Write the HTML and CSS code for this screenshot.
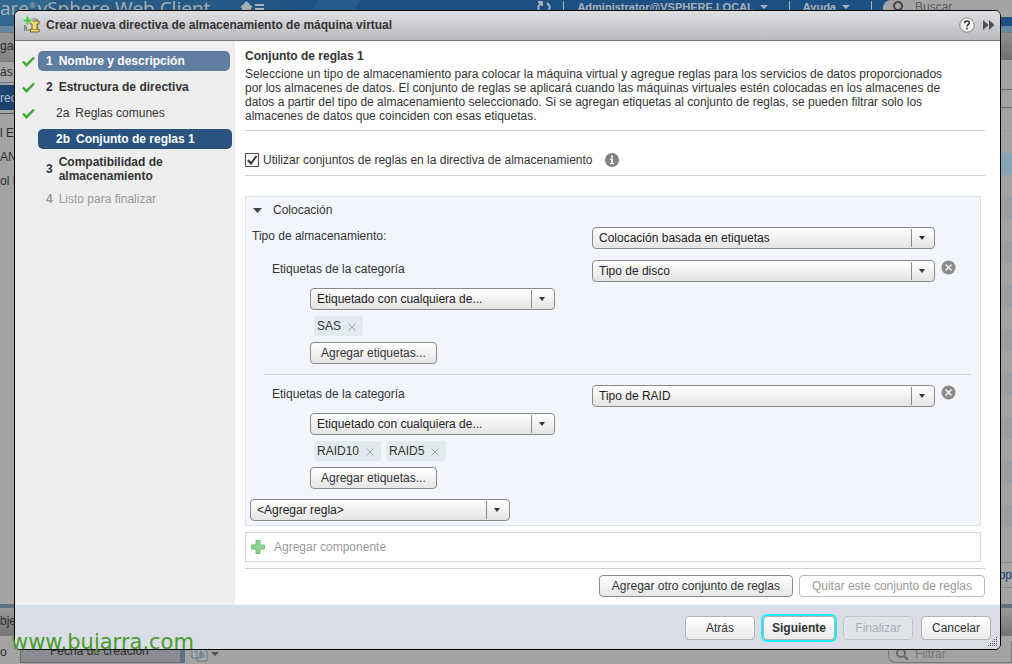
FILE: index.html
```html
<!DOCTYPE html>
<html lang="es">
<head>
<meta charset="utf-8">
<title>Crear nueva directiva de almacenamiento</title>
<link rel="stylesheet" href="styles.css">
</head>
<body>
<div class="client">
  <header class="topbar">
    <div class="brand"><span>are<sup>®</sup></span><span>vSphere Web Client</span></div>
    <svg class="home" width="24" height="14" viewBox="0 0 24 14"><path d="M0 7.5 6.5 1 13 7.500h-2V13H2V7.500zM15 4h9v2h-9zM15 8h9v2h-9z" fill="#a9b0b6"/></svg>
    <div class="account">
      <svg width="14" height="14" viewBox="0 0 14 14" fill="none" stroke="#a9b0b6" stroke-width="2"><path d="M1 2h4v4M4 3C0 6 1 11 4 12M10 3c4 3 3 7 0 9"/></svg>
      <i class="bar"></i>
      <span>Administrator@VSPHERE.LOCAL</span><i class="caret light"></i>
      <i class="bar"></i>
      <span>Ayuda</span><i class="caret light"></i>
      <i class="bar"></i>
    </div>
    <div class="search"><svg width="14" height="14" viewBox="0 0 14 14" fill="none" stroke="#444" stroke-width="2"><circle cx="7" cy="6" r="4"/><path d="m9 9 3 4"/></svg><span>Buscar</span></div>
  </header>
  <div class="strip"></div>
  <div class="main">
    <div class="nav">
      <div class="nav-title">gad</div>
      <div class="nav-back">ás</div>
      <div class="nav-current">rec</div>
      <div class="nav-list"><span>l Er</span><span>AN</span><span>ol I</span></div>
    </div>
    <div class="grid-pane">
      <div class="grid-title"></div>
      <div class="grid-tools"></div>
      <div class="grid-tools second"></div>
      <div class="grid-rows"></div>
      <div class="grid-tab">op</div>
    </div>
  </div>
  <div class="steel"></div>
  <div class="bottom-title">bje</div>
  <div class="bottom">
    <span class="col-o">o</span>
    <span class="col-date">Fecha de creación</span>
    <svg class="copy" width="17" height="18" viewBox="0 0 17 18" fill="#a9adb1" stroke="#667582"><path d="M1 2h9v12H1zM6 5h7l3 3v9H6z"/><path d="M3 5h3M3 8h2M8 9h5M8 11h6M8 13h6"/></svg>
    <i class="caret"></i>
    <div class="filter"><svg width="14" height="14" viewBox="0 0 14 14" fill="none" stroke="#666" stroke-width="2"><circle cx="6" cy="6" r="4"/><path d="m9 9 4 4"/></svg><span>Filtrar</span></div>
  </div>
</div>

<div class="dialog" role="dialog" aria-labelledby="dlg-title">
  <header class="dialog-head">
    <svg width="17" height="17" viewBox="0 0 17 17"><path d="M3 3h11v11H3z" fill="#d5d7da" stroke="#777"/><path d="M1.500 9v6M1.500 12h3" stroke="#888"/><path d="M7 5h9v3h-2v5h2v3H7.500V13H9V8H7z" fill="#f0d978" stroke="#7b621b"/><path d="M9 13.500h5" stroke="#b8973a"/><path d="M3 0h3v3h3v3H6v3H3V6H0V3h3z" fill="#4cc34f" stroke="#fff" stroke-width=".6"/></svg>
    <h1 id="dlg-title">Crear nueva directiva de almacenamiento de máquina virtual</h1>
    <button class="icon-btn" aria-label="Ayuda"><svg width="16" height="16" viewBox="0 0 16 16"><circle cx="8" cy="8" r="7.200" fill="#f3f3f4" stroke="#87878a"/><path d="M5.700 6.200C5.700 3.300 10.300 3.300 10.300 6c0 1.700-2.300 1.700-2.300 3.500M8 10.700v1.700" fill="none" stroke="#333" stroke-width="1.600"/></svg></button>
    <button class="icon-btn" aria-label="Contraer"><svg width="12" height="10" viewBox="0 0 12 10"><path d="m0 0 5.500 5L0 10zM6 0l5.500 5L6 10z" fill="#505052"/></svg></button>
  </header>
  <div class="dialog-body">
    <nav class="steps">
      <div class="step"><svg class="tick" width="13" height="11" viewBox="0 0 13 11"><path d="m1 5.500 3.500 3.700L12 1.500" /></svg><div class="step-label visited"><b>1</b><b>Nombre y descripción</b></div></div>
      <div class="step"><svg class="tick" width="13" height="11" viewBox="0 0 13 11"><path d="m1 5.500 3.500 3.700L12 1.500" /></svg><div class="step-label"><b>2</b><b>Estructura de directiva</b></div></div>
      <div class="step"><svg class="tick" width="13" height="11" viewBox="0 0 13 11"><path d="m1 5.500 3.500 3.700L12 1.500" /></svg><div class="step-label sub"><span>2a</span><span>Reglas comunes</span></div></div>
      <div class="step"><div class="step-label sub current"><b>2b</b><b>Conjunto de reglas 1</b></div></div>
      <div class="step"><div class="step-label"><b>3</b><b>Compatibilidad de<br>almacenamiento</b></div></div>
      <div class="step"><div class="step-label pending"><b>4</b><span>Listo para finalizar</span></div></div>
    </nav>
    <main class="content">
      <section class="intro">
        <h2>Conjunto de reglas 1</h2>
        <p>Seleccione un tipo de almacenamiento para colocar la máquina virtual y agregue reglas para los servicios de datos proporcionados<br>por los almacenes de datos. El conjunto de reglas se aplicará cuando las máquinas virtuales estén colocadas en los almacenes de<br>datos a partir del tipo de almacenamiento seleccionado. Si se agregan etiquetas al conjunto de reglas, se pueden filtrar solo los<br>almacenes de datos que coinciden con esas etiquetas.</p>
      </section>
      <div class="use-rules">
        <input type="checkbox" id="use" checked><label for="use">Utilizar conjuntos de reglas en la directiva de almacenamiento</label>
        <svg width="14" height="14" viewBox="0 0 14 14"><circle cx="7" cy="7" r="7" fill="#818181"/><path d="M6 2.500h2v2H6zM5 5.500h3v4.500h1v1.200H5V10h1V6.700H5z" fill="#fff"/></svg>
      </div>
      <section class="panel">
        <button class="panel-title"><svg width="9" height="5" viewBox="0 0 9 5"><path d="M0 0h9L4.500 5z" fill="#444"/></svg>Colocación</button>
        <div class="field type">
          <label for="kind">Tipo de almacenamiento:</label>
          <select id="kind"><option>Colocación basada en etiquetas</option></select>
        </div>
        <div class="category">
          <div class="field">
            <label for="cat1">Etiquetas de la categoría</label>
            <select id="cat1"><option>Tipo de disco</option></select>
            <button class="icon-btn" aria-label="Quitar"><svg width="15" height="15" viewBox="0 0 15 15"><circle cx="7.500" cy="7.500" r="7" fill="#8b8b8b"/><path d="m4.500 4.500 6 6m0-6-6 6" stroke="#fff" stroke-width="1.300"/></svg></button>
          </div>
          <div class="tags">
            <select class="match" aria-label="Coincidencia"><option>Etiquetado con cualquiera de...</option></select>
            <div class="chips"><span class="chip">SAS<button aria-label="Quitar SAS"><svg width="8" height="8" viewBox="0 0 8 8"><path d="m.5.5 7 7m0-7-7 7"/></svg></button></span></div>
            <button class="btn">Agregar etiquetas...</button>
          </div>
        </div>
        <div class="category ruled">
          <div class="field">
            <label for="cat2">Etiquetas de la categoría</label>
            <select id="cat2"><option>Tipo de RAID</option></select>
            <button class="icon-btn" aria-label="Quitar"><svg width="15" height="15" viewBox="0 0 15 15"><circle cx="7.500" cy="7.500" r="7" fill="#8b8b8b"/><path d="m4.500 4.500 6 6m0-6-6 6" stroke="#fff" stroke-width="1.300"/></svg></button>
          </div>
          <div class="tags">
            <select class="match" aria-label="Coincidencia"><option>Etiquetado con cualquiera de...</option></select>
            <div class="chips"><span class="chip">RAID10<button aria-label="Quitar RAID10"><svg width="8" height="8" viewBox="0 0 8 8"><path d="m.5.5 7 7m0-7-7 7"/></svg></button></span><span class="chip">RAID5<button aria-label="Quitar RAID5"><svg width="8" height="8" viewBox="0 0 8 8"><path d="m.5.5 7 7m0-7-7 7"/></svg></button></span></div>
            <button class="btn">Agregar etiquetas...</button>
          </div>
        </div>
        <select class="add-rule" aria-label="Agregar regla"><option>&lt;Agregar regla&gt;</option></select>
      </section>
      <button class="add-component" disabled><svg width="14" height="14" viewBox="0 0 14 14"><path d="M5 .5h4V5h4.500v4H9v4.500H5V9H.5V5H5z" fill="#8fd28f" stroke="#74bd78"/></svg>Agregar componente</button>
      <div class="set-actions">
        <button class="btn">Agregar otro conjunto de reglas</button>
        <button class="btn" disabled>Quitar este conjunto de reglas</button>
      </div>
    </main>
  </div>
  <footer class="dialog-foot">
    <button class="nav-btn">Atrás</button>
    <button class="nav-btn primary">Siguiente</button>
    <button class="nav-btn" disabled>Finalizar</button>
    <button class="nav-btn">Cancelar</button>
    <svg class="grip" width="10" height="10" viewBox="0 0 10 10"><path d="M8 0h1v1H8zM6 2h1v1H6zm2 0h1v1H8zM4 4h1v1H4zm2 0h1v1H6zm2 0h1v1H8zM2 6h1v1H2zm2 0h1v1H4zm2 0h1v1H6zm2 0h1v1H8zM0 8h1v1H0zm2 0h1v1H2zm2 0h1v1H4zm2 0h1v1H6zm2 0h1v1H8z" fill="#555"/></svg>
  </footer>
</div>
<div class="watermark">www.bujarra.com</div>
</body>
</html>
```
FILE: styles.css
```css
* { box-sizing: border-box; }
body, h1, h2, p { margin: 0; }
body, button, select {
  font-family: "Liberation Sans", Arial, sans-serif;
  font-size: 12px;
  color: #333;
}
body { height: 100vh; overflow: hidden; }
button { background: none; border: 0; padding: 0; }
svg { flex: none; display: block; }

/* Dimmed client behind the dialog */
.client {
  height: 100vh;
  display: flex;
  flex-direction: column;
  background: #a3a3a3;
  color: #2c2c2c;
  white-space: nowrap;
}
.topbar {
  flex: none;
  height: 26px;
  display: flex;
  align-items: flex-start;
  background: linear-gradient(125deg, #30688f 0 5%, #265b86 5% 20%, #1d5284 31%, #255c8c 31% 35%, #1c5083 35%);
  color: #a9b0b6;
}
.brand {
  width: 240px;
  display: flex;
  gap: 2px;
  font: 19px/16px "Open Sans", sans-serif;
}
.brand sup { font-size: 8px; line-height: 8px; }
.account {
  flex: 1;
  display: flex;
  justify-content: flex-end;
  align-items: center;
  gap: 6px;
  height: 14px;
  padding-right: 11px;
  font-size: 11px;
  font-weight: bold;
}
.bar { width: 1px; height: 12px; background: #a9b0b6; margin: 0 7px 0 15px; }
.account svg + .bar { margin-left: 6px; }
.bar:last-child { margin-right: 0; }
.caret { border: 4px solid transparent; border-top-color: #4b4b4b; border-bottom: 0; }
.caret.light { border-top-color: #a9b0b6; }
.search {
  width: 129px;
  height: 17px;
  display: flex;
  gap: 10px;
  padding-left: 8px;
  line-height: 14px;
  background: #a4a4a4;
  border-radius: 8px 0 0 8px;
  color: #5c5c5c;
}
.strip { flex: none; height: 7px; background: #66879f; border-bottom: 1px solid #777; }
.main { flex: 1; display: flex; justify-content: space-between; min-height: 0; }
.nav { width: 20px; overflow: hidden; }
.nav-title {
  height: 28px;
  line-height: 26px;
  background: linear-gradient(#989898, #838383);
}
.nav-back { height: 22px; line-height: 20px; background: #a6a6a6; border: solid #777; border-width: 1px 0; }
.nav-current { margin-top: 2px; height: 25px; line-height: 26px; background: #1c4470; color: #b5bcc5; }
.nav-list { margin-top: 3px; padding-top: 7px; border-top: 1px solid #555; display: grid; line-height: 24px; }
.grid-pane { width: 16px; display: flex; flex-direction: column; }
.grid-title { height: 27px; background: linear-gradient(#8f8f8f, #707070); }
.grid-tools { height: 30px; border-bottom: 1px solid #666; }
.grid-tools.second { height: 18px; }
.grid-rows {
  flex: 1;
  margin-top: 22px;
  background:
    linear-gradient(#86a5b8, #86a5b8) 0 23px / 100% 22px no-repeat,
    repeating-linear-gradient(#999ea2 0 1px, #a3a3a3 1px 23px, #999ea2 23px 44px);
}
.grid-tab { margin: 14px 0 16px; height: 26px; line-height: 24px; border: solid #858585; border-width: 1px 0; color: #153f68; text-align: right; }
.steel { flex: none; height: 4px; background: #5f7282; }
.bottom-title { flex: none; height: 27px; line-height: 26px; background: linear-gradient(#9a9a9a, #757579); }
.bottom { flex: none; height: 29px; padding-top: 5px; display: flex; border-top: 1px solid #777; }
.col-o { width: 20px; line-height: 22px; }
.col-date { width: 165px; height: 22px; line-height: 20px; padding-left: 29px; background: #8b8c91; border: solid #6f6467; border-width: 0 0 1px 1px; border-right: 5px solid #5f7282; }
.copy { margin: 3px 3px 0 6px; }
.bottom .caret { margin-top: 11px; height: 4px; }
.filter { margin-left: auto; width: 124px; height: 22px; padding: 6px 0 0 6px; display: flex; gap: 6px; border: 1px solid #777; border-top: 0; border-radius: 0 0 0 8px; color: #747474; }

/* Dialog */
.dialog {
  position: absolute;
  inset: 10px 11px 14px 14px;
  display: flex;
  flex-direction: column;
  border: 1px solid #000;
  border-radius: 6px;
  overflow: hidden;
  background: #fff;
}
.dialog-head {
  flex: none;
  height: 30px;
  display: flex;
  align-items: center;
  gap: 8px;
  padding: 0 5px 2px 8px;
  border-bottom: 1px solid #77777a;
  background: linear-gradient(#dedfe2, #b9b9be);
}
.dialog-head h1 { flex: 1; margin-left: -2px; font-size: 12px; line-height: 16px; }
.dialog-body { flex: 1; display: flex; min-height: 0; }
.steps {
  flex: none;
  width: 220px;
  padding: 10px 3px 0 7px;
  display: flex;
  flex-direction: column;
  gap: 6px;
  background: #eee;
}
.step { display: flex; align-items: center; justify-content: flex-end; gap: 3px; }
.tick { fill: none; stroke: #3aab2c; stroke-width: 2.4; }
.step-label {
  width: 194px;
  min-height: 20px;
  display: flex;
  align-items: center;
  gap: 6px;
  padding-left: 8px;
  border-radius: 5px;
  line-height: 14px;
}
.step-label.sub { padding-left: 18px; }
.step-label.visited { background: #607da2; color: #fff; width: 192px; margin-right: 2px; }
.step-label.current { background: #2a537f; color: #fff; }
.step-label.pending { color: #999; }

.content { flex: 1; padding: 8px 15px 0 10px; min-width: 0; }
.intro { height: 82px; padding-bottom: 5px; border-bottom: 1px solid #ccc; line-height: 14px; white-space: nowrap; }
.intro h2 { font-size: 12px; line-height: 14px; margin-bottom: 4px; }
.use-rules { height: 45px; display: flex; align-items: center; padding-top: 14px; border-bottom: 1px solid #d2d2d2; }
.use-rules input {
  appearance: none;
  width: 14px;
  height: 14px;
  margin: 0 4px 0 0;
  border: 1px solid #555;
  background: #f4f4f4 url("data:image/svg+xml,%3Csvg xmlns='http://www.w3.org/2000/svg' viewBox='0 0 12 12'%3E%3Cpath d='m2 6 3 3.500L10.500 2' fill='none' stroke='%23333' stroke-width='2'/%3E%3C/svg%3E") center / 12px 12px no-repeat;
}
.use-rules svg { margin-left: 12px; }

.panel { margin-top: 20px; padding-bottom: 4px; background: #f2f5fb; border: 1px solid #dde2ea; margin-right: 4px; }
.panel-title { width: 100%; height: 26px; display: flex; align-items: center; gap: 11px; padding-left: 7px; }
.field { display: grid; grid-template-columns: 346fr 343fr 45fr; align-items: start; }
.field label { padding-left: 26px; line-height: 18px; }
.field.type { margin: 4px 0 11px; }
.field.type label { padding-left: 6px; }
.field .icon-btn { justify-self: start; margin-left: 6px; }
select {
  appearance: none;
  height: 22px;
  padding: 0 30px 0 6px;
  border: 1px solid #8a8a8a;
  border-radius: 4px;
  color: #222;
  background:
    url("data:image/svg+xml,%3Csvg xmlns='http://www.w3.org/2000/svg' viewBox='0 0 6 4'%3E%3Cpath d='M0 0h6L3 4z' fill='%23333'/%3E%3C/svg%3E") right 9px center / 6px 4px no-repeat,
    linear-gradient(#8a8a8a, #8a8a8a) right 22px center / 1px 18px no-repeat,
    linear-gradient(#fff, #e4e4e4);
}
.tags { margin: 6px 0 0 64px; display: flex; flex-direction: column; align-items: flex-start; gap: 6px; }
.match { width: 245px; }
.chips { display: flex; gap: 5px; margin-left: 4px; }
.chip { height: 20px; display: flex; align-items: center; gap: 7px; padding: 0 7px 0 3px; border-radius: 3px; background: #e3eaed; }
.chip svg { stroke: #98a6b5; fill: none; margin-top: 2px; }
.category { padding-bottom: 10px; }
.category.ruled::before { content: ""; display: block; height: 1px; margin: 0 9px 10px 18px; background: #cfd2d6; }
.btn {
  height: 22px;
  padding: 0 10px;
  border: 1px solid #8a8a8a;
  border-radius: 4px;
  background: linear-gradient(#fff, #e6e6e6);
}
.btn:disabled { color: #999; border-color: #bbb; background: #fff; }
.add-rule { display: block; width: 260px; margin-left: 4px; }
.add-component {
  display: flex;
  align-items: center;
  gap: 9px;
  width: calc(100% - 4px);
  height: 30px;
  margin: 6px 4px 6px 0;
  padding-left: 5px;
  border: 1px solid #d5d5d5;
  color: #999;
}
.set-actions { display: flex; justify-content: flex-end; gap: 6px; padding-top: 6px; border-top: 1px solid #d0d0d0; }
.set-actions .btn { padding: 0 12px; }

.dialog-foot {
  position: relative;
  flex: none;
  height: 44px;
  display: flex;
  align-items: flex-start;
  justify-content: flex-end;
  gap: 8px;
  padding: 11px 9px 0 0;
  background: #d9dde5;
}
.nav-btn {
  min-width: 70px;
  height: 24px;
  border: 1px solid #aeb1b6;
  border-radius: 4px;
  background: linear-gradient(#fff, #e9e9e9);
}
.nav-btn.primary { min-width: 72px; font-weight: bold; box-shadow: 0 0 0 2px #1fe9fb; }
.nav-btn:disabled { color: #a9b0b5; border-color: #c0c5cb; background: #e0e4e8; }
.grip { position: absolute; right: 2px; bottom: 2px; }
.watermark {
  position: absolute;
  left: 11px;
  bottom: 10px;
  font: 21px/24px "DejaVu Sans", sans-serif;
  color: #4a9c2d;
}
```
